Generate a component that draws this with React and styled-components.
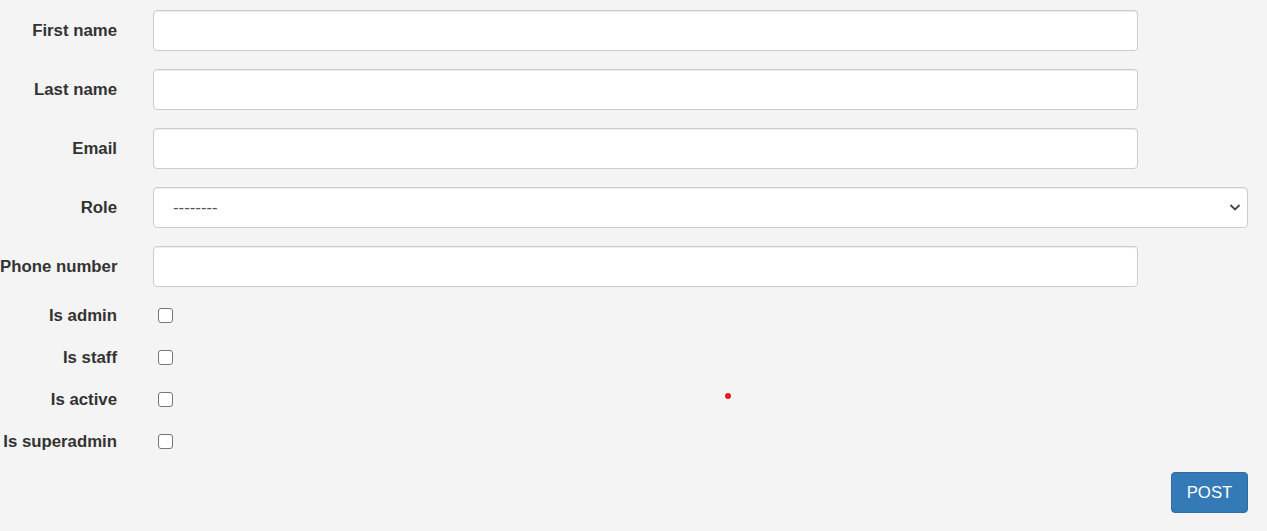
import React from "react";
import styled, { createGlobalStyle } from "styled-components";

const GlobalStyle = createGlobalStyle`
  html, body {
    margin: 0;
    padding: 0;
    background: #f4f4f4;
    font-family: "Liberation Sans", Arial, sans-serif;
  }
`;

const Page = styled.div`
  position: relative;
  width: 1267px;
  height: 531px;
  padding-top: 10px;
  box-sizing: border-box;
  background: #f4f4f4;
  color: #333;
`;

const Row = styled.div`
  display: flex;
  align-items: center;
  gap: 36px;
  height: ${p => (p.check ? "20px" : "41px")};
  margin-bottom: ${p => (p.check ? "22px" : "18px")};
`;

const Label = styled.label`
  width: 117px;
  flex: none;
  text-align: right;
  font-weight: bold;
  font-size: 16.8px;
  line-height: 20px;
  white-space: nowrap;
  margin-top: ${p => (p.check ? "2px" : "0")};
`;

const Input = styled.input`
  box-sizing: border-box;
  width: 985px;
  height: 41px;
  border: 1px solid #ccc;
  border-radius: 4px;
  background: #fff;
  box-shadow: inset 0 1px 1px rgba(0, 0, 0, 0.075);
  font: 16.5px "Liberation Sans", Arial, sans-serif;
  padding: 0 14px;
  outline: none;
`;

const SelectWrap = styled.div`
  position: relative;
  width: 1095px;
  height: 41px;
`;

const Select = styled.select`
  appearance: none;
  box-sizing: border-box;
  width: 100%;
  height: 41px;
  border: 1px solid #ccc;
  border-radius: 4px;
  background: #fff;
  box-shadow: inset 0 1px 1px rgba(0, 0, 0, 0.075);
  color: #555;
  font: 16.8px "Liberation Sans", Arial, sans-serif;
  padding: 0 0 0 19px;
  outline: none;
`;

const Chevron = styled.svg`
  position: absolute;
  right: 7px;
  top: 15px;
  pointer-events: none;
`;

const Box = styled.span`
  display: block;
  box-sizing: border-box;
  width: 15px;
  height: 15px;
  margin-left: 5px;
  border: 1px solid #767676;
  border-radius: 3px;
  background: #fff;
`;

const Actions = styled.div`
  display: flex;
  justify-content: flex-end;
  width: 1248px;
  margin-top: -1px;
`;

const Button = styled.button`
  width: 77px;
  height: 41px;
  background: #337ab7;
  border: 1px solid #2e6da4;
  border-radius: 4px;
  color: #fff;
  font: 16.8px "Liberation Sans", Arial, sans-serif;
  padding: 0;
`;

const Dot = styled.span`
  position: absolute;
  left: 725px;
  top: 393px;
  width: 6px;
  height: 6px;
  border-radius: 50%;
  background: #e8191b;
`;

const textFields = ["First name", "Last name", "Email"];
const checks = ["Is admin", "Is staff", "Is active", "Is superadmin"];

export default function App() {
  return (
    <>
      <GlobalStyle />
      <Page>
        {textFields.map(f => (
          <Row key={f}>
            <Label>{f}</Label>
            <Input type="text" />
          </Row>
        ))}
        <Row>
          <Label>Role</Label>
          <SelectWrap>
            <Select defaultValue="">
              <option value="">--------</option>
            </Select>
            <Chevron width="12" height="10" viewBox="0 0 12 10">
              <path d="M1.5 3 L6 7.5 L10.5 3" fill="none" stroke="#444" strokeWidth="1.8" />
            </Chevron>
          </SelectWrap>
        </Row>
        <Row>
          <Label>Phone number</Label>
          <Input type="text" />
        </Row>
        {checks.map(c => (
          <Row check key={c}>
            <Label check>{c}</Label>
            <Box />
          </Row>
        ))}
        <Actions>
          <Button>POST</Button>
        </Actions>
        <Dot />
      </Page>
    </>
  );
}
